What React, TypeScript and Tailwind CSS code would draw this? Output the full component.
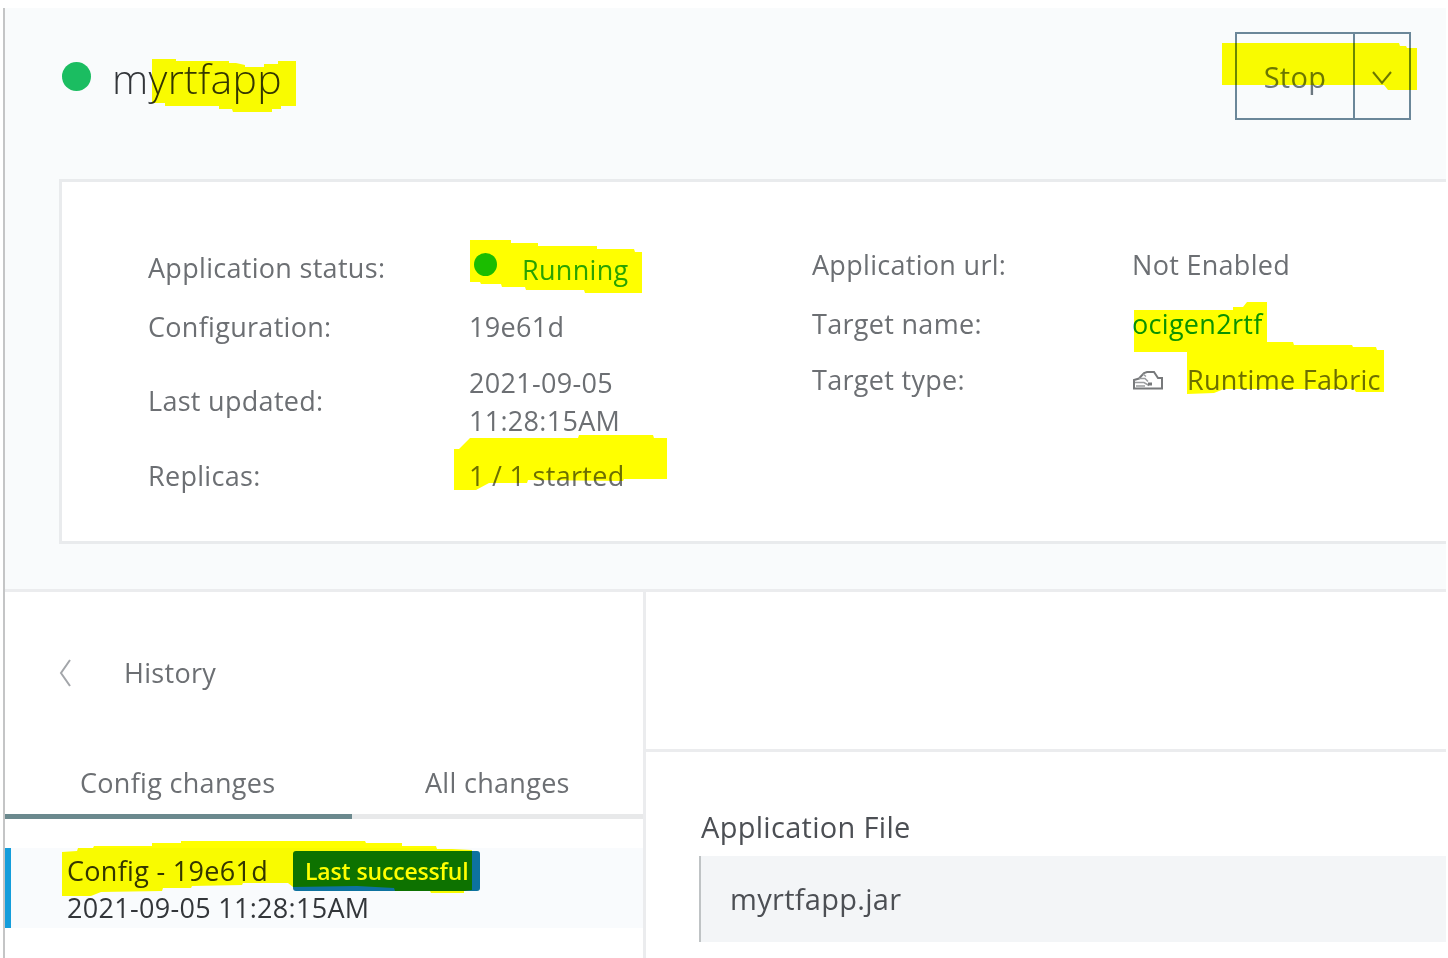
import type { ReactNode } from "react";
import clsx from "clsx";

// marker strokes, in page coordinates
const marks = [
  "152,59 176,59 176,61 229,61 229,63 236,63 245,65 245,67 264,67 264,64 278,64 278,61 296,61 296,106 281,106 281,109 272,109 272,112 233,112 232,109 219,109 219,106 165,106 165,103 152,103",
  "1222,43 1399,43 1400,46 1406,46 1407,48 1417,48 1417,90 1388,90 1384,85 1222,85",
  "470,240 511,240 511,243 538,243 538,246 597,246 597,249 634,249 635,252 642,252 642,293 585,293 584,290 526,290 525,287 502,287 501,284 481,284 480,282 470,282",
  "454,449 459,449 470,438 578,438 579,435 653,435 654,438 667,438 667,479 624,479 623,481 528,480 527,483 489,483 476,490 454,490",
  "1134,310 1233,310 1233,307 1243,307 1247,302 1267,302 1267,342 1293,342 1294,345 1352,345 1353,347 1376,347 1377,350 1384,350 1384,392 1356,392 1354,389 1224,389 1214,393 1187,394 1187,352 1134,352",
  "62,852 77,851 78,848 93,848 94,846 152,846 152,843 181,843 181,841 365,841 366,843 402,843 402,846 436,846 437,849 452,849 472,850 472,890 464,891 464,893 431,893 430,891 395,891 394,888 357,886 293,887 288,883 243,883 242,885 192,886 191,888 163,888 162,891 101,892 91,896 62,896",
];

function Marker() {
  return (
    <svg
      className="pointer-events-none absolute inset-0 mix-blend-multiply"
      width="1448"
      height="958"
      viewBox="0 0 1448 958"
    >
      {marks.map((points) => (
        <polygon key={points} points={points} fill="#ffff00" />
      ))}
    </svg>
  );
}

function Cell({ className, children }: { className?: string; children: ReactNode }) {
  return <div className={clsx("whitespace-nowrap", className)}>{children}</div>;
}

function FabricIcon() {
  return (
    <svg width="30" height="20" viewBox="0 0 30 20" fill="none" stroke="#77797b" strokeWidth="2">
      <path d="M1 18.500V10l5-1.500 5-5.500 3-1h7l4 6h4v10.500z" />
      <path d="M6 8.500h6l3 3M10 4l3 2.500M2 12.500h9l5 3M3 16h9" stroke="#9b9d9f" strokeWidth="1.500" />
      <path d="M15 12.500h4v3h-4z" fill="#77797b" stroke="none" />
    </svg>
  );
}

function Header() {
  return (
    <div className="flex h-[171px] justify-between pt-6 pr-[35px] pl-[57px]">
      <div className="flex h-[88px] items-center">
        <span className="size-[29px] rounded-full bg-[#1bbd61]" />
        <h1 className="mt-[3px] ml-[21px] text-[41px] leading-[52px] font-light text-[#33363a]">myrtfapp</h1>
      </div>
      <div className="flex h-[88px] border-2 border-[#6b8799] text-[#6b7780]">
        <button className="w-[116px] pt-0.5 text-[29px]">Stop</button>
        <button className="flex w-[56px] items-center justify-center border-l-2 border-[#6b8799] pt-1">
          <svg width="20" height="16" viewBox="0 0 20 16" fill="none" stroke="currentColor" strokeWidth="2">
            <path d="M1 2l9 11 9-11" />
          </svg>
        </button>
      </div>
    </div>
  );
}

function Details() {
  return (
    <div className="ml-[54px] flex h-[365px] border-[3px] border-r-0 border-[#e9ebed] bg-white pl-[86px] text-[27px] leading-[38px] text-[#6c6f73]">
      <div className="grid w-[664px] grid-cols-[321px_1fr] grid-rows-[59px_56px_93px_38px] pt-[67px]">
        <Cell>Application status:</Cell>
        <Cell className="flex pt-0.5 text-[#2aa35a]">
          <span className="mt-0.5 mr-[25px] ml-[5px] size-[23px] rounded-full bg-[#1bbd61]" />
          Running
        </Cell>
        <Cell>Configuration:</Cell>
        <Cell>19e61d</Cell>
        <Cell className="pt-[18px]">Last updated:</Cell>
        <Cell>
          2021-09-05
          <br />
          11:28:15AM
        </Cell>
        <Cell>Replicas:</Cell>
        <Cell>1 / 1 started</Cell>
      </div>
      <div className="grid grid-cols-[320px_1fr] grid-rows-[59px_56px_38px] pt-[64px]">
        <Cell>Application url:</Cell>
        <Cell>Not Enabled</Cell>
        <Cell>Target name:</Cell>
        <Cell className="text-[#0a92b4]">ocigen2rtf</Cell>
        <Cell>Target type:</Cell>
        <Cell className="flex items-center gap-6 pl-px">
          <FabricIcon />
          Runtime Fabric
        </Cell>
      </div>
    </div>
  );
}

function History() {
  return (
    <div className="w-[641px] border-r-[3px] border-[#ebecee] text-[27px] leading-[38px]">
      <div className="flex h-[162px] items-center pl-[54px] text-[#6c6f73]">
        <svg width="13" height="28" viewBox="0 0 13 28" fill="none" stroke="#a3a6aa" strokeWidth="2">
          <path d="M11 1L2 14l9 13" />
        </svg>
        <span className="ml-[52px]">History</span>
      </div>
      <div className="flex h-[65px] pt-2.5 text-[#6c6f73]">
        <div className="w-[347px] border-b-[5px] border-[#6b898e] pl-[75px]">Config changes</div>
        <div className="flex-1 border-b-[5px] border-[#e8e9ea] pl-[73px]">All changes</div>
      </div>
      <div className="mt-[29px] h-[80px] border-l-[6px] border-[#149ddb] bg-[#f9fbfd] pl-14 text-[#33363a]">
        <div className="flex h-[41px] items-center pt-[5px]">
          Config - 19e61d
          <span className="ml-[25px] h-10 w-[187px] rounded-[3px] bg-[#0d729f] pl-3 text-[23px] leading-[40px] font-semibold tracking-[-0.15px] text-white">
            Last successful
          </span>
        </div>
        <div>2021-09-05 11:28:15AM</div>
      </div>
    </div>
  );
}

function FilePanel() {
  return (
    <div className="flex-1">
      <div className="h-[160px] border-b-[3px] border-[#ebecee]" />
      <div className="pt-[55px] pl-[53px] text-[29px] leading-[40px] text-[#4c4f54]">
        <div className="pl-0.5">Application File</div>
        <div className="mt-[9px] flex h-[86px] items-center border-l-2 border-[#bfc3c5] bg-[#f3f5f7] pl-[29px]">
          myrtfapp.jar
        </div>
      </div>
    </div>
  );
}

export default function App() {
  return (
    <div className="relative h-[958px] w-[1448px] overflow-hidden bg-white pt-2 pr-0.5 pl-[3px] font-['Open_Sans',sans-serif] tracking-[0.3px]">
      <div className="flex h-full flex-col border-l-2 border-[#c4c5c6]">
        <div className="h-[584px] border-b-[3px] border-[#ebecee] bg-[#f9fbfc]">
          <Header />
          <Details />
        </div>
        <div className="flex flex-1">
          <History />
          <FilePanel />
        </div>
      </div>
      <Marker />
    </div>
  );
}
